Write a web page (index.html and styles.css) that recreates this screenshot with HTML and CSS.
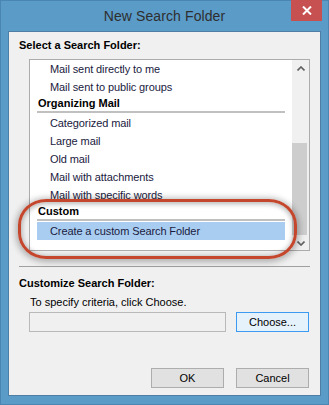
FILE: index.html
```html
<!DOCTYPE html>
<html>
<head>
  <meta charset="utf-8">
  <title>New Search Folder</title>
  <link rel="stylesheet" href="styles.css">
</head>
<body>
  <div class="window">
    <div class="titlebar">
      <span class="title">New Search Folder</span>
      <div class="close">
        <svg width="10" height="9" viewBox="0 0 10 9"><path d="M1 0.5 L9 8.5 M9 0.5 L1 8.5" stroke="#fff" stroke-width="2"/></svg>
      </div>
    </div>
    <div class="client">
      <div class="label first">Select a Search Folder:</div>
      <div class="listbox">
        <ul class="items">
          <li class="item">Mail sent directly to me</li>
          <li class="item">Mail sent to public groups</li>
          <li class="group">Organizing Mail</li>
          <li class="item">Categorized mail</li>
          <li class="item">Large mail</li>
          <li class="item">Old mail</li>
          <li class="item">Mail with attachments</li>
          <li class="item">Mail with specific words</li>
          <li class="group">Custom</li>
          <li class="item selected">Create a custom Search Folder</li>
        </ul>
        <div class="scrollbar">
          <div class="arrow up">
            <svg width="8" height="5" viewBox="0 0 8 5"><path d="M0.5 4.5 L4 1 L7.5 4.5" fill="none" stroke="#606060" stroke-width="1.6"/></svg>
          </div>
          <div class="track"><div class="thumb"></div></div>
          <div class="arrow down">
            <svg width="8" height="5" viewBox="0 0 8 5"><path d="M0.5 0.5 L4 4 L7.5 0.5" fill="none" stroke="#606060" stroke-width="1.6"/></svg>
          </div>
        </div>
      </div>
      <div class="rule"></div>
      <div class="label second">Customize Search Folder:</div>
      <div class="hint">To specify criteria, click Choose.</div>
      <div class="criteria">
        <div class="textbox"></div>
        <button class="btn focus">Choose...</button>
      </div>
      <div class="actions">
        <button class="btn">OK</button>
        <button class="btn">Cancel</button>
      </div>
      <!-- red ring drawn over the Custom section -->
      <div class="ring"></div>
    </div>
  </div>
</body>
</html>
```

FILE: styles.css
```css
body {
  margin: 0;
  font-family: "Liberation Sans", Arial, sans-serif;
  font-size: 11px;
  color: #000;
}

.window {
  width: 329px;
  height: 405px;
  box-sizing: border-box;
  background-color: #5b9bc8;
  border: 1px solid #4b86b2;
}

.titlebar {
  position: relative;
  height: 30px;
  text-align: center;
}

.title {
  display: inline-block;
  margin-top: 6px;
  font-size: 14px;
  line-height: 18px;
  color: #2e2e2e;
  letter-spacing: 0.1px;
}

.close {
  position: absolute;
  top: -1px;
  right: 6px;
  width: 31px;
  height: 21px;
  background-color: #c75050;
  display: flex;
  align-items: center;
  justify-content: center;
}

.client {
  position: relative;
  margin: 0 7px 0 7px;
  height: 365px;
  box-sizing: border-box;
  background-color: #f0f0f0;
  border: 1px solid #4f7ea5;
  padding: 0 10px;
}

.label {
  font-weight: bold;
  line-height: 14px;
}

.label.first {
  margin-top: 6px;
}

.label.second {
  margin-top: 9px;
}

.listbox {
  margin: 7px 0 0 10px;
  height: 192px;
  box-sizing: border-box;
  border: 1px solid #acacac;
  background-color: #fff;
  display: flex;
  overflow: hidden;
}

.items {
  list-style: none;
  margin: 0;
  padding: 0;
  width: 262px;
}

.item {
  height: 18px;
  line-height: 18px;
  padding-left: 20px;
  color: #1a1a40;
  letter-spacing: -0.1px;
}

.item.selected {
  margin: 0 7px;
  padding-left: 13px;
  background-color: #a9cdf0;
}

.group {
  margin: 0 7px 1px 7px;
  padding: 0 0 1px 1px;
  line-height: 14px;
  font-weight: bold;
  border-bottom: 2px solid #c0c0c0;
}

.scrollbar {
  width: 17px;
  background-color: #f0f0f0;
  display: flex;
  flex-direction: column;
}

.arrow {
  display: flex;
  align-items: center;
  justify-content: center;
}

.arrow.up {
  height: 18px;
}

.arrow.down {
  height: 14px;
  padding-top: 2px;
}

.track {
  flex: 1;
}

.thumb {
  margin-top: 67px;
  width: 15px;
  height: 92px;
  background-color: #cdcdcd;
}

.rule {
  margin-top: 15px;
  border-top: 1px solid #a0a0a0;
}

.hint {
  margin: 5px 0 0 11px;
  line-height: 14px;
}

.criteria {
  display: flex;
  gap: 10px;
  margin: 3px 0 0 10px;
}

.textbox {
  width: 197px;
  height: 20px;
  box-sizing: border-box;
  border: 1px solid #b9b9b9;
  background-color: #f0f0f0;
}

.btn {
  width: 73px;
  height: 20px;
  box-sizing: border-box;
  border: 1px solid #adadad;
  background-color: #e1e1e1;
  font-family: "Liberation Sans", Arial, sans-serif;
  font-size: 11px;
  color: #000;
  padding: 0;
}

.btn.focus {
  border-color: #3c9bf0;
  background-color: #e5f1fb;
}

.actions {
  display: flex;
  justify-content: flex-end;
  gap: 12px;
  margin-top: 36px;
  padding-right: 1px;
}

.ring {
  position: absolute;
  left: 9px;
  top: 167px;
  width: 279px;
  height: 60px;
  box-sizing: border-box;
  border: 3px solid #c4472d;
  border-radius: 28px / 26px;
  box-shadow: 0 1px 6px 2px rgba(0, 0, 0, 0.28), inset 0 1px 5px 1px rgba(0, 0, 0, 0.28);
}
```
